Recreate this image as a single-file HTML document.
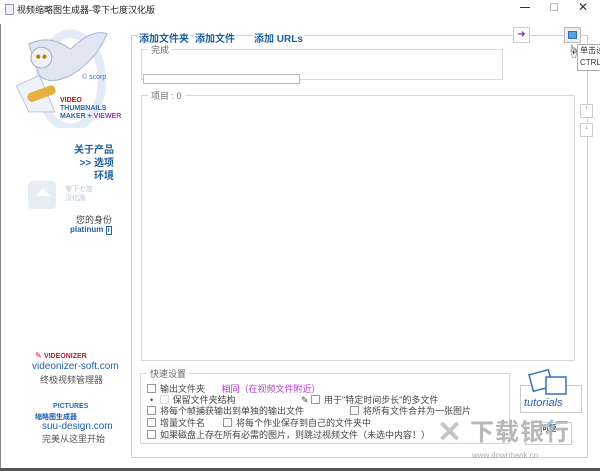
<!DOCTYPE html>
<html><head><meta charset="utf-8"><style>
*{margin:0;padding:0;box-sizing:border-box}
body{width:600px;height:471px;overflow:hidden;background:#fff;position:relative;font-family:"Liberation Sans","Noto Sans CJK SC",sans-serif;font-size:9px;color:#333}
.a{position:absolute}
.gb{position:absolute;border:1px solid #d8d8d8}
.gb>span{position:absolute;top:-7px;left:6px;background:#fff;padding:0 3px;color:#666;font-size:9px}
.cb{display:inline-block;width:9px;height:9px;border:1px solid #999;background:#fff;vertical-align:-1px;margin-right:4px}
.lk{color:#1d5fa0;font-weight:bold;font-size:10px}
.row{position:absolute;font-size:9px;color:#444;white-space:nowrap}
</style></head><body>
<div class="a" style="left:0;top:0;width:600px;height:24px;background:#fff"></div>
<div class="a" style="left:5px;top:4px;width:9px;height:11px;border:1px solid #99a;background:#eef"></div>
<div class="a" style="left:17px;top:3px;font-size:9px;color:#222">视频缩略图生成器-零下七度汉化版</div>
<div class="a" style="left:520px;top:7px;width:10px;height:1px;background:#333"></div>
<div class="a" style="left:550px;top:3px;width:8px;height:8px;border:1px solid #bbb"></div>
<div class="a" style="left:578px;top:0px;font-size:12px;color:#333">✕</div>
<div class="a" style="left:0;top:24px;width:1px;height:447px;background:#888"></div>
<div class="a" style="left:0;top:468px;width:600px;height:3px;background:#555"></div>

<svg class="a" style="left:8px;top:28px" width="120" height="100" viewBox="0 0 115 95">
<ellipse cx="60" cy="50" rx="30" ry="45" fill="none" stroke="#e3ebf5" stroke-width="8"/>
<path d="M8 55 L30 45 L45 80 L20 80 Z" fill="#eef2fa" stroke="#bcc8dd"/>
<path d="M20 15 Q40 5 60 20 Q80 0 95 5 Q85 30 60 45 Q40 55 30 45 Z" fill="#dfe6f2" stroke="#aab8d0"/>
<circle cx="32" cy="28" r="10" fill="#eef1f8" stroke="#aab"/>
<circle cx="29" cy="27" r="2" fill="#a80"/><circle cx="35" cy="27" r="2" fill="#a80"/>
<rect x="18" y="58" width="28" height="9" rx="4" fill="#e8b040" transform="rotate(-20 32 62)"/>
</svg>
<div class="a" style="left:82px;top:74px;font-size:7px;color:#4a7ab0">© scorp</div>
<div class="a" style="left:60px;top:97px;font-size:7px;font-weight:bold;line-height:8px">
<div style="color:#c0101a">VIDEO</div><div style="color:#2a66b0">THUMBNAILS</div><div style="color:#2a66b0">MAKER <span style="color:#9040c0">+ VIEWER</span></div></div>
<div class="a" style="right:486px;top:144px;text-align:right;line-height:13px" >
<div class="lk">关于产品</div><div class="lk">&gt;&gt; 选项</div><div class="lk">环境</div></div>
<div class="a" style="left:28px;top:181px;width:28px;height:28px;background:#e6edf5;border-radius:4px"></div>
<div class="a" style="left:36px;top:188px;width:0;height:0;border-left:7px solid transparent;border-right:7px solid transparent;border-bottom:8px solid #fff"></div>
<div class="a" style="left:65px;top:185px;font-size:7px;color:#b8c8dc;line-height:9px">零下七度<br>汉化版</div>
<div class="a" style="left:76px;top:213px;font-size:9px;color:#444">您的身份</div>
<div class="a" style="left:70px;top:225px;font-size:8px;color:#1d5fa0;font-weight:bold">platinum <span style="border:1px solid #1d5fa0;padding:0 1px;font-size:7px">i</span></div>

<div class="a" style="left:35px;top:351px;font-size:8px;color:#c03">✎ <b style="color:#b02030;font-size:7px">VIDEONIZER</b></div>
<div class="a" style="left:32px;top:361px;font-size:10px;color:#1d60b0">videonizer-soft.com</div>
<div class="a" style="left:40px;top:373px;font-size:9px;color:#555">终极视频管理器</div>
<div class="a" style="left:53px;top:403px;font-size:7px;color:#2a6ab8;font-weight:bold">PICTURES</div>
<div class="a" style="left:35px;top:412px;font-size:7px;color:#1d60b0;font-weight:bold">缩略图生成器</div>
<div class="a" style="left:42px;top:421px;font-size:10px;color:#1d60b0">suu-design.com</div>
<div class="a" style="left:42px;top:432px;font-size:9px;color:#555">完美从这里开始</div>

<div class="a" style="left:131px;top:35px;width:457px;height:423px;border:1px solid #cfcfcf"></div>
<div class="a lk" style="left:138px;top:30px;background:#fff;padding:0 1px">添加文件夹</div>
<div class="a lk" style="left:194px;top:30px;background:#fff;padding:0 1px">添加文件</div>
<div class="a lk" style="left:253px;top:30px;background:#fff;padding:0 1px">添加 URLs</div>
<div class="a" style="left:513px;top:27px;width:17px;height:16px;background:#fff;border:1px solid #ccc;font-size:10px;color:#9020d0;line-height:14px;text-align:center">➜</div>
<div class="a" style="left:564px;top:27px;width:17px;height:16px;background:#eee;border:1px solid #bbb"></div>
<div class="a" style="left:568px;top:31px;width:9px;height:8px;background:#5a9ee0;border:1px solid #3070b0"></div>
<div class="a" style="left:567px;top:41px;font-size:13px;color:#333">☝</div>
<div class="a" style="left:577px;top:44px;width:30px;height:27px;background:#fff;border:1px solid #aaa;font-size:8px;line-height:12px;padding-left:2px;color:#333">单击设<br>CTRL</div>
<div class="a" style="left:580px;top:104px;width:13px;height:14px;border:1px solid #ccc;background:#fff;font-size:7px;text-align:center;color:#777">↑</div>
<div class="a" style="left:580px;top:123px;width:13px;height:14px;border:1px solid #ccc;background:#fff;font-size:7px;text-align:center;color:#777">↓</div>

<div class="gb" style="left:141px;top:49px;width:362px;height:31px"><span>完成</span></div>
<div class="a" style="left:143px;top:74px;width:157px;height:10px;border:1px solid #bbb;background:#fff"></div>
<div class="gb" style="left:141px;top:95px;width:434px;height:266px"><span>项目 : 0</span></div>

<div class="gb" style="left:140px;top:373px;width:370px;height:71px"><span>快速设置</span></div>
<div class="row" style="left:147px;top:382px"><span class="cb"></span>输出文件夹 <span style="color:#b040d0;margin-left:14px">相同（在视频文件附近）</span></div>
<div class="row" style="left:150px;top:393px">• <span class="cb" style="border-color:#ddd;margin-left:4px"></span>保留文件夹结构</div>
<div class="row" style="left:301px;top:393px">✎ <span class="cb"></span>用于"特定时间步长"的多文件</div>
<div class="row" style="left:147px;top:404px"><span class="cb"></span>将每个帧捕获输出到单独的输出文件</div>
<div class="row" style="left:350px;top:404px"><span class="cb"></span>将所有文件合并为一张图片</div>
<div class="row" style="left:147px;top:416px"><span class="cb"></span>增量文件名</div>
<div class="row" style="left:223px;top:416px"><span class="cb"></span>将每个作业保存到自己的文件夹中</div>
<div class="row" style="left:147px;top:428px"><span class="cb"></span>如果磁盘上存在所有必需的图片，则跳过视频文件（未选中内容！）</div>

<div class="a" style="left:520px;top:385px;width:62px;height:28px;border:1px solid #ccc"></div>
<svg class="a" style="left:528px;top:369px" width="45" height="30"><rect x="3" y="3" width="20" height="17" fill="#fff" stroke="#3a70b8" stroke-width="1.5" transform="rotate(-15 13 12)"/><rect x="18" y="8" width="20" height="17" fill="#fff" stroke="#3a70b8" stroke-width="1.5"/></svg>
<div class="a" style="left:524px;top:397px;font-size:11px;color:#2a60a8;font-style:italic">tutorials</div>
<div class="a" style="left:525px;top:422px;width:47px;height:23px;border:1px solid #ccc;font-size:8px;color:#1d5fa0;text-align:center;font-weight:bold">问题</div>
<div class="a" style="left:305px;top:416px;font-size:36px;color:#bbb;font-weight:bold;left:305px;display:none"></div>
<div class="a" style="left:437px;top:418px;font-size:30px;line-height:30px;color:#c4c4c4;font-weight:bold">✕</div>
<div class="a" style="left:470px;top:418px;font-size:24px;line-height:30px;color:#b8b8b8;font-weight:bold;letter-spacing:1px">下载银行</div>
<div class="a" style="left:472px;top:451px;font-size:8px;color:#aaa">www.downbank.cn</div>
</body></html>
